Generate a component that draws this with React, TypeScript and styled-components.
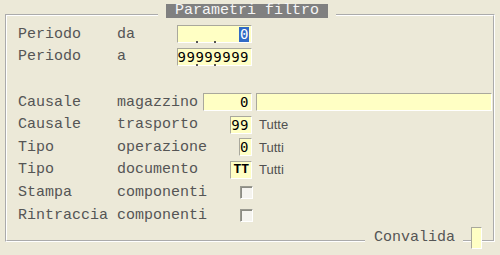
import { FC } from 'react';
import styled, { createGlobalStyle } from 'styled-components';

const GlobalStyle = createGlobalStyle`
  html, body {
    margin: 0;
    padding: 0;
    background: #ece9d8;
  }
  body {
    width: 500px;
    height: 255px;
    overflow: hidden;
    font-family: 'Liberation Mono', monospace;
  }
`;

interface RowData {
  first: string;
  second: string;
}

const Frame = styled.fieldset`
  position: relative;
  box-sizing: border-box;
  width: 490px;
  height: 238px;
  min-width: 0;
  margin: 4px 0 0 5px;
  padding: 0 1px 0 11px;
  border: 2px groove #fff;
`;

const Legend = styled.legend`
  margin-left: 140px;
  padding: 0 8px 7px;
`;

const Title = styled.span`
  display: block;
  height: 14px;
  padding: 0 9px;
  background: #808080;
  color: #f6f6f6;
  font: 15px/14px 'Liberation Mono', monospace;
  white-space: pre;
`;

const Form = styled.div`
  display: flex;
  flex-direction: column;
  margin-top: -2px;
`;

const Row = styled.div`
  display: grid;
  grid-template-columns: 99px 1fr auto 240px;
  align-items: center;
  height: 22.6px;
`;

const Label = styled.span`
  color: #555;
  font: 15px 'Liberation Mono', monospace;
  white-space: pre;
`;

const FieldCell = styled.div`
  display: flex;
  justify-content: flex-end;
`;

const ExtraCell = styled.div`
  display: flex;
  align-items: center;
`;

const Field = styled.div<{ $width?: number; $bold?: boolean }>`
  position: relative;
  box-sizing: border-box;
  width: ${({ $width }) => ($width ? `${$width}px` : 'auto')};
  height: 18px;
  padding: 0 2px 0 1px;
  display: flex;
  align-items: center;
  justify-content: flex-end;
  background: #ffffc4;
  border: 1px solid;
  border-color: #a9a89c #fff #fff #a9a89c;
  color: #000;
  font: ${({ $bold }) =>
    $bold ? "bold 13px 'Liberation Mono', monospace" : "14px 'DejaVu Sans Mono', monospace"};
  letter-spacing: ${({ $bold }) => ($bold ? '0' : '0.5px')};
  white-space: pre;
`;

const WideField = styled(Field)`
  flex: 1;
  margin-left: 4px;
`;

const Selected = styled.span`
  display: inline-block;
  height: 15px;
  line-height: 15px;
  padding-left: 1px;
  background: #316ac5;
  color: #fff;
`;

const MaskDot = styled.span<{ $left: number }>`
  position: absolute;
  bottom: -1px;
  left: ${({ $left }) => $left}px;
  width: 2px;
  height: 2px;
  background: #555;
`;

const Note = styled.span`
  padding-left: 7px;
  color: #505050;
  font: 13px 'Liberation Sans', Arial, sans-serif;
`;

const Check = styled.span`
  box-sizing: border-box;
  width: 13px;
  height: 13px;
  margin-right: -1px;
  background: #f5f4ef;
  border: 1px solid;
  border-color: #9a9a90 #fff #fff #9a9a90;
  box-shadow: inset 1px 1px 0 #8c8c84;
`;

const Footer = styled.div`
  position: absolute;
  right: 11px;
  bottom: -9px;
  display: flex;
  align-items: center;
  gap: 8px;
  height: 22px;
`;

const ConfirmLabel = styled.span`
  padding: 0 8px 0 9px;
  background: #ece9d8;
  color: #555;
  font: 15px/22px 'Liberation Mono', monospace;
`;

const ConfirmBox = styled.span`
  box-sizing: border-box;
  width: 11px;
  height: 22px;
  background: #ffffc4;
  border: 1px solid;
  border-color: #a9a89c #fff #fff #a9a89c;
`;

const Labels: FC<RowData> = ({ first, second }) => (
  <>
    <Label>{first}</Label>
    <Label>{second}</Label>
  </>
);

const DateField: FC<{ children: React.ReactNode }> = ({ children }) => (
  <Field $width={75}>
    {children}
    <MaskDot $left={18} />
    <MaskDot $left={36} />
  </Field>
);

const App: FC = () => {
  return (
    <>
      <GlobalStyle />
      <Frame>
        <Legend>
          <Title>Parametri filtro</Title>
        </Legend>
        <Form>
          <Row>
            <Labels first="Periodo" second="da" />
            <FieldCell>
              <DateField>
                <Selected>0</Selected>
              </DateField>
            </FieldCell>
          </Row>
          <Row>
            <Labels first="Periodo" second="a" />
            <FieldCell>
              <DateField>99999999</DateField>
            </FieldCell>
          </Row>
          <Row />
          <Row>
            <Labels first="Causale" second="magazzino" />
            <FieldCell>
              <Field $width={49}>0</Field>
            </FieldCell>
            <ExtraCell>
              <WideField />
            </ExtraCell>
          </Row>
          <Row>
            <Labels first="Causale" second="trasporto" />
            <FieldCell>
              <Field $width={22}>99</Field>
            </FieldCell>
            <ExtraCell>
              <Note>Tutte</Note>
            </ExtraCell>
          </Row>
          <Row>
            <Labels first="Tipo" second="operazione" />
            <FieldCell>
              <Field $width={13}>0</Field>
            </FieldCell>
            <ExtraCell>
              <Note>Tutti</Note>
            </ExtraCell>
          </Row>
          <Row>
            <Labels first="Tipo" second="documento" />
            <FieldCell>
              <Field $width={22} $bold>
                TT
              </Field>
            </FieldCell>
            <ExtraCell>
              <Note>Tutti</Note>
            </ExtraCell>
          </Row>
          <Row>
            <Labels first="Stampa" second="componenti" />
            <FieldCell>
              <Check />
            </FieldCell>
          </Row>
          <Row>
            <Labels first="Rintraccia" second="componenti" />
            <FieldCell>
              <Check />
            </FieldCell>
          </Row>
        </Form>
        <Footer>
          <ConfirmLabel>Convalida</ConfirmLabel>
          <ConfirmBox />
        </Footer>
      </Frame>
    </>
  );
};

export default App;
